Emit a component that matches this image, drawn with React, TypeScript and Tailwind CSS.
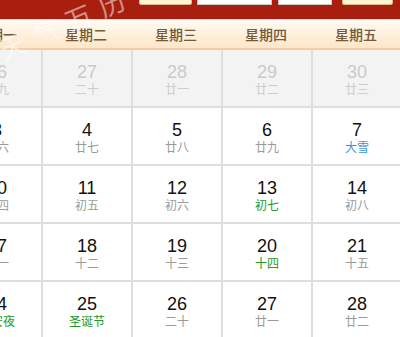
import React from 'react';

type Day = { n: number; l: string; tone?: 'prev' | 'green' | 'blue' };

const weeks: Day[][] = [
  [
    { n: 26, l: '十九', tone: 'prev' },
    { n: 27, l: '二十', tone: 'prev' },
    { n: 28, l: '廿一', tone: 'prev' },
    { n: 29, l: '廿二', tone: 'prev' },
    { n: 30, l: '廿三', tone: 'prev' },
  ],
  [
    { n: 3, l: '廿六' },
    { n: 4, l: '廿七' },
    { n: 5, l: '廿八' },
    { n: 6, l: '廿九' },
    { n: 7, l: '大雪', tone: 'blue' },
  ],
  [
    { n: 10, l: '初四' },
    { n: 11, l: '初五' },
    { n: 12, l: '初六' },
    { n: 13, l: '初七', tone: 'green' },
    { n: 14, l: '初八' },
  ],
  [
    { n: 17, l: '十一' },
    { n: 18, l: '十二' },
    { n: 19, l: '十三' },
    { n: 20, l: '十四', tone: 'green' },
    { n: 21, l: '十五' },
  ],
  [
    { n: 24, l: '平安夜', tone: 'green' },
    { n: 25, l: '圣诞节', tone: 'green' },
    { n: 26, l: '二十' },
    { n: 27, l: '廿一' },
    { n: 28, l: '廿二' },
  ],
];

const weekdays = ['星期一', '星期二', '星期三', '星期四', '星期五'];

const cjk = "font-['Noto_Sans_CJK_SC',sans-serif]";

function Cell({ d }: { d: Day }) {
  const prev = d.tone === 'prev';
  const lunarColor =
    d.tone === 'green'
      ? 'text-[#22992a]'
      : d.tone === 'blue'
        ? 'text-[#3d94d6]'
        : prev
          ? 'text-[#cdcdcd]'
          : 'text-[#9a9a9a]';
  return (
    <div
      className={`flex h-[58px] w-[90px] shrink-0 flex-col items-center border-b-2 border-l-2 border-[#dedede] pt-[13px] ${
        prev ? 'bg-[#f3f3f3]' : 'bg-white'
      }`}
    >
      <div
        className={`font-['Liberation_Sans',Arial,sans-serif] text-[18px] leading-[18px] ${
          prev ? 'text-[#cacaca]' : 'text-[#111111]'
        }`}
      >
        {d.n}
      </div>
      <div className={`${cjk} mt-[1px] text-[12px] leading-[14px] ${lunarColor}`}>{d.l}</div>
    </div>
  );
}

export default function App() {
  return (
    <div className="relative h-[337px] w-[400px] overflow-hidden bg-white">
      {/* top red toolbar, only the lower edge shows */}
      <div className="flex h-[19px] items-start bg-[#a81f10]">
        <div className="ml-[139px] -mt-[17px] h-[22px] w-[53px] rounded-[2px] border border-[#d9b98a] bg-[#fff3d2]" />
        <div className="ml-[5px] -mt-[17px] h-[22px] w-[75px] border border-[#c9c9c9] bg-white" />
        <div className="ml-[6px] -mt-[17px] h-[22px] w-[54px] border border-[#c9c9c9] bg-white" />
        <div className="ml-[10px] -mt-[17px] h-[22px] w-[51px] rounded-[2px] border border-[#d9b98a] bg-[#fff3d2]" />
      </div>

      {/* weekday header */}
      <div className="h-[1px] bg-[#f6d9c0]" />
      <div className="-ml-[49px] flex h-[30px] items-center border-b-2 border-[#f7cf9f] bg-gradient-to-b from-[#fffbf4] to-[#fde6c8]">
        {weekdays.map((w) => (
          <div
            key={w}
            className={`${cjk} w-[90px] shrink-0 text-center text-[14px] font-medium text-[#735a3b]`}
          >
            {w}
          </div>
        ))}
      </div>

      {/* grid */}
      <div className="-ml-[49px] flex flex-col">
        {weeks.map((row, i) => (
          <div key={i} className="flex">
            {row.map((d, j) => (
              <Cell key={j} d={d} />
            ))}
          </div>
        ))}
      </div>

      {/* watermark */}
      <div
        className={`${cjk} pointer-events-none absolute left-[0px] top-[31px] origin-left -rotate-[23deg] whitespace-nowrap text-[26px] leading-[38px] tracking-[10px] text-white/50`}
      >
        天气万历
      </div>
    </div>
  );
}
